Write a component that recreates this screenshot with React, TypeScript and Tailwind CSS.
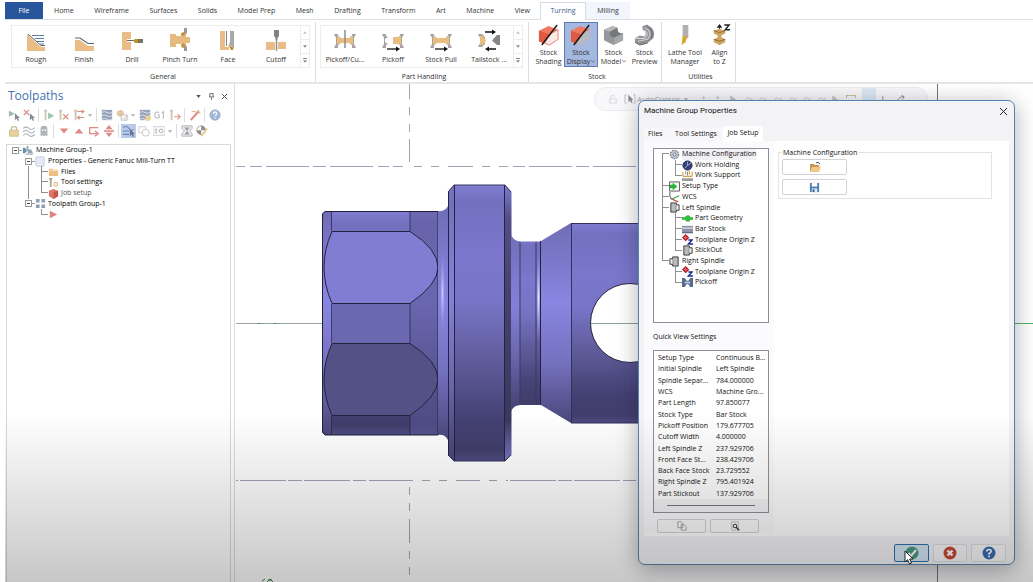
import React from "react";
import clsx from "clsx";

type IconProps = { className?: string };

/* ---------- ribbon data ---------- */

const tabs = [
  "Home",
  "Wireframe",
  "Surfaces",
  "Solids",
  "Model Prep",
  "Mesh",
  "Drafting",
  "Transform",
  "Art",
  "Machine",
  "View",
];

const generalItems = [
  {
    label: "Rough",
    icon: (
      <>
        <path d="M3 7L17 20H21V24H3Z" fill="#e9bd85" />
        <path d="M4 7L17 18.500H21" fill="none" stroke="#5b6572" strokeWidth="1" />
        <path d="M8 8.500H20M11 11.500H20M13 14.500H20M16 17H20" stroke="#5d7c9e" strokeWidth="1.100" />
      </>
    ),
  },
  {
    label: "Finish",
    icon: (
      <>
        <path d="M3 13H8L16 19H22V24H3Z" fill="#e9bd85" />
        <path d="M3 11H8L16 16.500H22" fill="none" stroke="#5b6572" strokeWidth="1.200" />
      </>
    ),
  },
  {
    label: "Drill",
    icon: (
      <>
        <path d="M2 5H11V12H7V15H11V23H2Z" fill="#e9bd85" />
        <path d="M7 13.500H14" stroke="#5b6572" />
        <path d="M13 13.500L15 12H19V16H15Z" fill="#bd9226" />
        <path d="M18 12H23V16H18Z" fill="#7a7466" />
      </>
    ),
  },
  {
    label: "Pinch Turn",
    icon: (
      <>
        <path d="M2 7H8V9H13V7H18V10H22V16H18V19H13V17H8V20H2Z" fill="#e6bb80" />
        <path d="M16 1H19V6L15 9L14 7L16 5ZM14 19L16 17L19 20V24H16V21Z" fill="#9a9a9d" />
        <path d="M13 6L17 5L16 9L13 8ZM13 18L16 16L17 20L14 21Z" fill="#c4922f" />
      </>
    ),
  },
  {
    label: "Face",
    icon: (
      <>
        <path d="M4 4H9V20H13V23H4Z" fill="#e9bd85" />
        <path d="M10.500 4V19" stroke="#7b838e" />
        <path d="M14 4H18V22L13 17L14 15Z" fill="#a9a9ac" />
        <path d="M12 17L17 21V23H15Z" fill="#c08b27" />
      </>
    ),
  },
  {
    label: "Cutoff",
    icon: (
      <>
        <path d="M2 15H11V23H2ZM14 15H22V22H14Z" fill="#e9bd85" />
        <path d="M10 3H15V9L13.500 11V13H11.500V11L10 9Z" fill="#818286" />
        <path d="M12.500 13V24" stroke="#8b8c8f" strokeWidth="1.400" />
      </>
    ),
  },
];

const chucks = (
  <path d="M1 7H5V9L7 10V17L5 18V21H1L3 17V11ZM23 7H19V9L17 10V17L19 18V21H23L21 17V11Z" fill="#a5a5a8" />
);

const handlingItems = [
  {
    label: "Pickoff/Cu...",
    icon: (
      <>
        {chucks}
        <path d="M4 9L8 11H16L20 9V18L16 16H8L4 18Z" fill="#e9bd80" />
        <path d="M12 3V21" stroke="#8b8c92" strokeWidth="1.500" />
      </>
    ),
  },
  {
    label: "Pickoff",
    icon: (
      <>
        {chucks}
        <path d="M12 10H17L20 9V18L17 17H12Z" fill="#e9bd80" />
        <path d="M7 10V17L4 15V12Z" fill="#fff" />
        <path d="M6 22H17" stroke="#111" strokeWidth="1.300" />
        <path d="M15 19.500L19 22L15 24.500Z" fill="#111" />
      </>
    ),
  },
  {
    label: "Stock Pull",
    icon: (
      <>
        {chucks}
        <path d="M4 9L8 11H16L20 9V18L16 16H8L4 18Z" fill="#e9bd80" />
        <path d="M6 22H17" stroke="#111" strokeWidth="1.300" />
        <path d="M15 19.500L19 22L15 24.500Z" fill="#111" />
      </>
    ),
  },
  {
    label: "Tailstock ...",
    icon: (
      <>
        <path d="M1 7H5L8 10V17L5 20H1L3 16V11Z" fill="#a5a5a8" />
        <path d="M3 9H6L9 13.500L6 18H3Z" fill="#e9bd80" />
        <path d="M23 8H20L15 13.500L20 18H23Z" fill="#85868a" />
        <path d="M8 5H16M11 22H19" stroke="#111" strokeWidth="1.300" />
        <path d="M15 2.500L19 5L15 7.500ZM12 19.500L8 22L12 24.500Z" fill="#111" />
      </>
    ),
  },
];

const slash = <path d="M4 22L20 1" stroke="#161616" strokeWidth="1.500" />;

const stockItems = [
  {
    label: ["Stock", "Shading"],
    icon: (
      <>
        <path d="M1 7L11 2L21 6V16L12 22L1 18Z" fill="#ef7960" />
        <path d="M12 11L21 6V16L12 22L7 20Z" fill="#fbe9e6" stroke="#e58a7a" />
        <path d="M1 7L12 11L8 17L5 20L1 18Z" fill="#de5a42" />
        {slash}
      </>
    ),
  },
  {
    label: ["Stock", "Display"],
    menu: true,
    active: true,
    icon: (
      <>
        <path d="M1 7L11 2L21 6L12 11V22L1 18Z" fill="#ef7960" />
        <path d="M1 7L12 11V15L5 20L1 18Z" fill="#de5a42" />
        <path d="M12 11L21 6V16L12 22L7 20Z" fill="#b6bac2" />
        {slash}
      </>
    ),
  },
  {
    label: ["Stock", "Model"],
    menu: true,
    icon: (
      <>
        <path d="M1 6L10 2L15 4L16 9L21 10V17L11 22L1 17Z" fill="#96979b" />
        <path d="M1 6L10 2L15 4L7 8Z" fill="#b9babe" />
        <path d="M7 8L15 4C15 8 16 10 21 10L12 14C8 14 7 12 7 8Z" fill="#77787c" />
        <path d="M12 14L21 10V17L11 22Z" fill="#a6a7ab" />
      </>
    ),
  },
  {
    label: ["Stock", "Preview"],
    icon: (
      <>
        <path d="M9 2L13 1C20 3 23 9 20 15L14 20L6 22L1 19V15L6 12L11 13C13 11 13 8 9 6Z" fill="#8f9094" />
        <path d="M9 6C15 8 15 12 11 15L1 15M11 4C18 7 18 12 14 16L4 18" fill="none" stroke="#cfd0d2" strokeWidth="1.200" />
        <path d="M13 1C18 4 20 9 18 15" fill="none" stroke="#67686b" />
        <path d="M1 19L6 22L14 20" fill="none" stroke="#67686b" />
      </>
    ),
  },
];

const utilityItems = [
  {
    label: ["Lathe Tool", "Manager"],
    icon: (
      <>
        <path d="M9 1H15V14L11 17L9 14Z" fill="#b0b1b5" />
        <path d="M9 13L14 12L12 19L8 22Z" fill="#d7a62e" />
      </>
    ),
  },
  {
    label: ["Align", "to Z"],
    icon: (
      <>
        <path d="M11 1V22" stroke="#444" strokeWidth="1.200" />
        <path d="M8 4L11 0L14 4Z" fill="#222" />
        <path d="M5 7L11 5L17 7V10L13 12V14L17 16V19L11 22L5 19V16L9 14V12L5 10Z" fill="#cda563" />
        <path d="M5 7L11 9L17 7M5 16L11 18L17 16" fill="none" stroke="#8f6c30" />
        <path d="M16 1H21L17 6H22" fill="none" stroke="#222" strokeWidth="1.500" />
      </>
    ),
  },
];

/* ---------- ribbon ---------- */

function MiniCaret({ className }: IconProps) {
  return (
    <svg viewBox="0 0 6 4" className={clsx("w-[4px] h-[3px]", className)} aria-hidden>
      <path d="M0 0H6L3 4Z" fill="currentColor" />
    </svg>
  );
}

function Gallery({ items }: { items: { label: string; icon: React.ReactNode }[] }) {
  return (
    <div className="flex border border-[#ececee] h-[43px]">
      {items.map((it) => (
        <button key={it.label} type="button" className="w-[48px] flex flex-col items-center pt-px">
          <svg viewBox="0 0 24 26" className="w-[24px] h-[26px] mb-[2px]" aria-hidden>
            {it.icon}
          </svg>
          <span className="whitespace-nowrap leading-[9px]">{it.label}</span>
        </button>
      ))}
      <div className="w-[9px] flex flex-col border-l border-[#ececee] text-[#888]">
        <button type="button" aria-label="Scroll up" className="flex-1 flex items-center justify-center border-b border-[#ececee] text-[#c4c4c4]">
          <MiniCaret className="rotate-180" />
        </button>
        <button type="button" aria-label="Scroll down" className="flex-1 flex items-center justify-center border-b border-[#ececee]">
          <MiniCaret />
        </button>
        <button type="button" aria-label="More" className="flex-1 flex flex-col items-center justify-center gap-px">
          <span className="w-[4px] h-px bg-[#888]" />
          <MiniCaret />
        </button>
      </div>
    </div>
  );
}

type BigItem = { label: string[]; icon: React.ReactNode; menu?: boolean; active?: boolean };

function BigButton({ item }: { item: BigItem }) {
  return (
    <button
      type="button"
      className={clsx(
        "h-[45px] flex flex-col items-center border pt-px whitespace-nowrap",
        item.active ? "bg-[#a5b8e0] border-[#5c7cb8] min-w-[34px]" : "border-transparent min-w-[31px] px-px"
      )}
    >
      <svg viewBox="0 0 23 23" className="w-[22px] h-[22px] mb-[2px]" aria-hidden>
        {item.icon}
      </svg>
      <span className="leading-[9px]">{item.label[0]}</span>
      <span className="leading-[9px] flex items-center gap-px">
        {item.label[1]}
        {item.menu && (
          <svg viewBox="0 0 6 4" className="w-[4px] h-[3px]" aria-hidden>
            <path d="M0 0L3 3L6 0" fill="none" stroke="#555" />
          </svg>
        )}
      </span>
    </button>
  );
}

function Group({ title, className, children }: { title: string; className?: string; children: React.ReactNode }) {
  return (
    <section className={clsx("flex flex-col justify-between border-r border-[#dcdcde]", className)}>
      <div className="flex">{children}</div>
      <h2 className="text-center leading-[10px]">{title}</h2>
    </section>
  );
}

function Ribbon() {
  return (
    <header className="pl-[5px] pt-[2px] font-['Open_Sans',sans-serif] text-[7px] text-[#333]">
      <nav className="flex h-[18px] border-b border-[#dfe0e4]">
        <button type="button" className="w-[38px] h-[17px] pt-px bg-[#28559b] text-white">
          File
        </button>
        <div className="w-[497px] flex justify-between pl-px">
          {tabs.map((t) => (
            <button key={t} type="button" className="px-[10px] pt-px">
              {t}
            </button>
          ))}
        </div>
        <button type="button" className="w-[46px] h-[18px] bg-white border border-b-0 border-[#d5dbe6] text-[#3f5f8f]">
          Turning
        </button>
        <button type="button" className="w-[44px] pt-px bg-[#f2f6fc]">
          Milling
        </button>
      </nav>
      <div className="flex h-[62px] pt-[2px]">
        <Group title="General" className="w-[311px] pt-[3px] pl-[6px]">
          <Gallery items={generalItems} />
        </Group>
        <Group title="Part Handling" className="w-[213px] pt-[3px] pl-[4px]">
          <Gallery items={handlingItems} />
        </Group>
        <Group title="Stock" className="w-[133px] pl-[4px]">
          {stockItems.map((it) => (
            <BigButton key={it.label.join(" ")} item={it} />
          ))}
        </Group>
        <Group title="Utilities" className="w-[74px] pl-[4px]">
          {utilityItems.map((it) => (
            <BigButton key={it.label.join(" ")} item={it} />
          ))}
        </Group>
      </div>
      <div className="h-[2px] bg-[#e6e6e8]" />
    </header>
  );
}

/* ---------- toolpaths panel ---------- */

function ToolIcon({ label, selected, children }: { label: string; selected?: boolean; children: React.ReactNode }) {
  return (
    <button
      type="button"
      aria-label={label}
      className={clsx("w-[15px] h-[14px] flex items-center justify-center", selected && "bg-[#b9c9ea]")}
    >
      <svg viewBox="0 0 14 14" className="w-[12px] h-[12px] opacity-60" aria-hidden>
        {children}
      </svg>
    </button>
  );
}

function ToolSep() {
  return <span className="w-[5px] h-[14px] flex justify-center"><span className="w-px bg-[#dedee0]" /></span>;
}

function ToolCaret() {
  return <span className="w-[8px] flex items-center justify-center text-[#aaa]"><MiniCaret /></span>;
}

const pointer = <path d="M8 5V13L10 11L11.500 14L13 13L11.500 10.500H14Z" fill="#333c4c" />;
const toolbit = <path d="M1 1H5L4 5V13H2V5Z" fill="#a9a27c" />;
const cross = <path d="M6 6L12 12M12 6L6 12" stroke="#c2463c" strokeWidth="1.500" />;
const waveBlock = (
  <>
    <rect x="1" y="1" width="12" height="12" fill="#4f658c" />
    <path d="M1 4Q4 2 7 4T13 4M1 8Q4 6 7 8T13 8M1 12Q4 10 7 12T13 12" fill="none" stroke="#fff" strokeWidth="0.800" />
  </>
);

function PanelToolbar() {
  return (
    <div className="pl-px flex flex-col gap-[2px]">
      <div className="flex">
        <ToolIcon label="Select all">
          <path d="M1 2L8 5.500L1 9Z" fill="#58906f" />
          {pointer}
        </ToolIcon>
        <ToolIcon label="Unselect all">
          <path d="M1 1L7 7M7 1L1 7" stroke="#c2463c" strokeWidth="1.500" />
          {pointer}
        </ToolIcon>
        <ToolSep />
        <ToolIcon label="Regenerate selected">
          {toolbit}
          <path d="M6 4L13 8L6 12Z" fill="#58a078" />
        </ToolIcon>
        <ToolIcon label="Regenerate dirty">
          {toolbit}
          {cross}
        </ToolIcon>
        <ToolIcon label="Transform toolpaths">
          {toolbit}
          <path d="M5 3H13M10 1L13 3L10 5M13 10H5M8 8L5 10L8 12" fill="none" stroke="#c2463c" strokeWidth="1.200" />
        </ToolIcon>
        <ToolCaret />
        <ToolSep />
        <ToolIcon label="Backplot">{waveBlock}</ToolIcon>
        <ToolIcon label="Verify">
          <path d="M1 3L6 1L9 3V8L4 9L1 7Z" fill="#d8a25d" />
          <path d="M6 7H13V13H6Z" fill="#fff" stroke="#7b879c" />
          <path d="M8 10L10 12L13 7" fill="none" stroke="#d08a3c" />
        </ToolIcon>
        <ToolCaret />
        <ToolIcon label="Simulate">
          {waveBlock}
          <circle cx="10.500" cy="10.500" r="3.300" fill="#dfb450" />
        </ToolIcon>
        <ToolIcon label="Post">
          <path d="M6 4Q1 2 1 7T6 10V7H4M9 5L11 3V11" fill="none" stroke="#8a8f99" strokeWidth="1.300" />
        </ToolIcon>
        <ToolIcon label="High feed">
          {toolbit}
          <path d="M6 9H13M10 6L13 9L10 12" fill="none" stroke="#c2463c" strokeWidth="1.200" />
        </ToolIcon>
        <ToolSep />
        <ToolIcon label="Tool wand">
          <path d="M2 13L11 3" stroke="#c2463c" strokeWidth="2.500" />
          <path d="M3 3H8M10 1L13 5" stroke="#cf8a3a" strokeWidth="1.500" />
        </ToolIcon>
        <ToolSep />
        <ToolIcon label="Help">
          <circle cx="7" cy="7" r="6" fill="#5b8ac6" stroke="#6c7788" />
          <path d="M5 5.500Q5 3.500 7 3.500T9 5.500Q9 6.500 7 8M7 9.500V11" fill="none" stroke="#fff" strokeWidth="1.500" />
        </ToolIcon>
      </div>
      <div className="flex">
        <ToolIcon label="Lock">
          <path d="M4 6V4Q4 2 7 2T10 4V6" fill="none" stroke="#a08a4a" strokeWidth="1.500" />
          <rect x="2" y="6" width="10" height="7" fill="#dcb65a" stroke="#ab8b3b" />
        </ToolIcon>
        <ToolIcon label="Toggle display">
          <path d="M0 4Q4 1 7 4T14 3M0 8Q4 5 7 8T14 7M0 12Q4 9 7 12T14 11" fill="none" stroke="#6d7f96" strokeWidth="1.200" />
        </ToolIcon>
        <ToolIcon label="Ghost">
          <path d="M3 13V5Q3 1 7 1T11 5V13L9 12L7 13L5 12Z" fill="#7c7f85" />
          <path d="M5 5H6.500V7H5ZM8 5H9.500V7H8Z" fill="#fff" />
        </ToolIcon>
        <ToolSep />
        <ToolIcon label="Move down"><path d="M2 4H12L7 10Z" fill="#cc3a35" /></ToolIcon>
        <ToolIcon label="Move up"><path d="M2 10H12L7 4Z" fill="#cc3a35" /></ToolIcon>
        <ToolIcon label="Position insert">
          <path d="M12 3H2V10H10M8 7L12 10L8 13" fill="none" stroke="#cc3a35" strokeWidth="1.500" />
        </ToolIcon>
        <ToolIcon label="Scroll insert">
          <path d="M3 5L7 0L11 5ZM3 9L7 14L11 9ZM1 6H13V8H1Z" fill="#cc3a35" />
        </ToolIcon>
        <ToolSep />
        <ToolIcon label="Only display selected" selected>
          <path d="M0 3Q4 0 7 4T12 5M0 7H7M0 11H7" fill="none" stroke="#3c5a94" strokeWidth="1.300" />
          {pointer}
        </ToolIcon>
        <ToolIcon label="Display geometry">
          <path d="M1 2H9V9H1Z" fill="none" stroke="#a5a0b5" />
          <circle cx="9" cy="9" r="4" fill="#fff" stroke="#b08d94" />
        </ToolIcon>
        <ToolIcon label="Advanced display">
          <path d="M0 2H14V12H0Z" fill="none" stroke="#a9a9b0" />
          <path d="M2 5H5M2 7H5M2 9H5" stroke="#667" />
          <circle cx="9.500" cy="7" r="2.200" fill="none" stroke="#667" />
        </ToolIcon>
        <ToolCaret />
        <ToolSep />
        <ToolIcon label="Cycle time">
          <path d="M1 1H13V4L10 7L13 10V13H1V10L4 7L1 4Z" fill="#d9dade" stroke="#777b84" />
          <path d="M4 3H10L7 7L10 11H4L7 7Z" fill="#555b66" />
        </ToolIcon>
        <ToolIcon label="Options">
          <circle cx="6" cy="6" r="5" fill="#fff" stroke="#555" />
          <path d="M6 1A5 5 0 0 1 11 6H6ZM6 11A5 5 0 0 1 1 6H6Z" fill="#444" />
          <path d="M6 13L13 4" stroke="#d9a73c" strokeWidth="2" />
        </ToolIcon>
      </div>
    </div>
  );
}

type GuideKind = "first" | "tee" | "end" | "line" | "blank";

/* One cell of connector lines in a tree row */
function Guide({ kind, wide }: { kind: GuideKind; wide?: boolean }) {
  const up = kind === "tee" || kind === "end" || kind === "line";
  const down = kind === "first" || kind === "tee" || kind === "line";
  const across = kind === "first" || kind === "tee" || kind === "end";
  return (
    <span className={clsx("self-stretch flex flex-col shrink-0", wide ? "w-[13px]" : "w-[7px]")}>
      <span className={clsx("h-1/2 border-[#909090]", up && "border-l", across && "border-b")} />
      <span className={clsx("h-1/2 border-[#909090]", down && "border-l")} />
    </span>
  );
}

function Expander({ open }: { open?: boolean }) {
  return (
    <>
      <button type="button" aria-label={open ? "Collapse" : "Expand"} className="w-[7px] h-[7px] border border-[#999] bg-white flex items-center justify-center shrink-0">
        <span className="w-[3px] h-px bg-[#444]" />
      </button>
      <span className="w-[3px] h-px bg-[#999] shrink-0" />
    </>
  );
}

function TreeIcon({ children }: { children: React.ReactNode }) {
  return (
    <svg viewBox="0 0 12 12" className="w-[11px] h-[11px] shrink-0 mr-[2px]" aria-hidden>
      {children}
    </svg>
  );
}

function OperationTree() {
  return (
    <ul className="grid auto-rows-fr h-[75px] pl-[5px] text-[7px] text-black whitespace-nowrap">
      <li className="flex items-center">
        <Expander open />
        <TreeIcon>
          <path d="M1 3H3L5 5V7L3 9H1Z" fill="#5d93ad" />
          <path d="M5 1H7V5H10L12 9H6V6H5Z" fill="#98a5b5" />
          <path d="M4 10H12" stroke="#8f97a2" />
        </TreeIcon>
        <span className="pl-px">Machine Group-1</span>
      </li>
      <li className="flex items-center pl-[13px]">
        <Expander open />
        <TreeIcon>
          <rect x="1" y="1" width="9" height="10" rx="1" fill="#e7eaf6" stroke="#c3cae2" />
        </TreeIcon>
        Properties - Generic Fanuc Mill-Turn TT
      </li>
      <li className="flex items-center pl-[16px]">
        <Guide kind="line" wide />
        <Guide kind="tee" />
        <TreeIcon>
          <path d="M1 3H5L6 4H11V11H1Z" fill="#efbf82" />
          <path d="M1 5H11" stroke="#f8deb8" />
        </TreeIcon>
        Files
      </li>
      <li className="flex items-center pl-[16px]">
        <Guide kind="line" wide />
        <Guide kind="tee" />
        <TreeIcon>
          <path d="M1 1H5L4 4V11H2V4Z" fill="#b0a890" />
          <circle cx="8.500" cy="8" r="2" fill="none" stroke="#d8b878" strokeWidth="1.300" />
        </TreeIcon>
        Tool settings
      </li>
      <li className="flex items-center pl-[16px] text-[#555]">
        <Guide kind="line" wide />
        <Guide kind="end" />
        <TreeIcon>
          <path d="M1 3L6 1L11 3V9L6 12L1 9Z" fill="#dc7468" />
          <path d="M6 5L11 3V9L6 12Z" fill="#c4564c" />
        </TreeIcon>
        Job setup
      </li>
      <li className="flex items-center pl-[13px]">
        <Expander open />
        <TreeIcon>
          <path d="M1 1H5V5H1ZM7 1H11V5H7ZM1 7H5V11H1ZM7 7H11V11H7Z" fill="#8ca0b5" />
        </TreeIcon>
        Toolpath Group-1
      </li>
      <li className="flex items-center pl-[16px]">
        <Guide kind="blank" wide />
        <Guide kind="end" />
        <TreeIcon>
          <path d="M2 2L10 6L2 10Z" fill="#e5817b" />
        </TreeIcon>
      </li>
    </ul>
  );
}

function ToolpathsPanel() {
  return (
    <aside className="w-[226px] shrink-0 flex flex-col font-['Open_Sans',sans-serif]">
      <div className="flex items-center h-[24px] pl-[3px] pr-[4px]">
        <h2 className="flex-1 text-[12px] leading-[24px] text-[#3e72b0]">Toolpaths</h2>
        <div className="flex items-center gap-[8px] text-[#555]">
          <MiniCaret className="w-[5px] h-[3px]" />
          <svg viewBox="0 0 6 8" className="w-[5px] h-[7px]" aria-hidden>
            <path d="M1 0.500H5V4.500M1 0.500V4.500M0 4.500H6M3 5V8" fill="none" stroke="currentColor" />
          </svg>
          <svg viewBox="0 0 6 6" className="w-[5px] h-[5px]" aria-hidden>
            <path d="M0 0L6 6M6 0L0 6" stroke="currentColor" strokeWidth="1.200" />
          </svg>
        </div>
      </div>
      <PanelToolbar />
      <div className="flex-1 mt-[6px] ml-px border border-b-0 border-[#dadadc]">
        <OperationTree />
      </div>
    </aside>
  );
}

/* ---------- graphics view ---------- */

function PartView() {
  return (
    <svg viewBox="235 84 798 498" preserveAspectRatio="xMinYMin slice" className="w-full h-full" role="img" aria-label="Turned part">
      <defs>
        <linearGradient id="turned" x1="0" y1="0" x2="0" y2="1">
          <stop offset="0" stopColor="#817ed2" />
          <stop offset="0.060" stopColor="#7370bf" />
          <stop offset="0.250" stopColor="#7a77cc" />
          <stop offset="0.420" stopColor="#7875c8" />
          <stop offset="0.620" stopColor="#615e9e" />
          <stop offset="0.850" stopColor="#444174" />
          <stop offset="0.960" stopColor="#413e6b" />
          <stop offset="1" stopColor="#4f4c83" />
        </linearGradient>
        <linearGradient id="chamfer" x1="0" y1="0" x2="0" y2="1">
          <stop offset="0" stopColor="#6f6cb6" />
          <stop offset="0.400" stopColor="#8986e2" />
          <stop offset="0.700" stopColor="#7471bf" />
          <stop offset="1" stopColor="#4a477a" />
        </linearGradient>
        <linearGradient id="dark" x1="0" y1="0" x2="0" y2="1">
          <stop offset="0" stopColor="#7f7cd0" />
          <stop offset="0.120" stopColor="#514e86" />
          <stop offset="0.400" stopColor="#45426f" />
          <stop offset="0.850" stopColor="#3a375f" />
          <stop offset="1" stopColor="#7a77c8" />
        </linearGradient>
        <radialGradient id="glint">
          <stop offset="0" stopColor="#eeeeff" />
          <stop offset="1" stopColor="#a09dee" stopOpacity="0" />
        </radialGradient>
      </defs>

      {/* stock boundary */}
      <g stroke="#a0a3b3" fill="none">
        <path d="M236 166.500H640" strokeDasharray="9 5 12 4 43 4 13 4 43 5 11 4 10 11 8 9 8 9 25 9 8 9" />
        <path d="M236 480.500H640" strokeDasharray="2 2 46 2 14 2 46 3 13 3 44 9 8 9 8 9 24 9 8 9" />
        <path d="M409.500 84V162" strokeDasharray="15 8 8 9 8 7 24 20" />
        <path d="M409.500 487V575" strokeDasharray="8 8 8 8 24 8 8 8" />
        <path d="M937.500 84V582" stroke="#77777c" />
      </g>
      <path d="M236 323.500H1033" stroke="#9aa89e" />
      <path d="M1014 323.500H1033" stroke="#4fb062" />
      <path d="M258 323.500H260M274 323.500H276" stroke="#3d8a4c" />

      {/* hex head */}
      <path d="M325 211H438V435H325L322 432V214Z" fill="url(#turned)" />
      <path d="M325 211H332V435H325L322 432V214Z" fill="url(#chamfer)" />
      <path d="M410 211H438V435H410Z" fill="#5d5a9b" opacity="0.550" />
      <path d="M332 304H410V343H332Z" fill="#6b68b2" />
      <g stroke="#23213d" strokeWidth="1">
        <path d="M332 231.500H410Q438 249 438 267.500Q438 284 410 303.500H332Q316 267 332 231.500Z" fill="#807dd2" />
        <path d="M332 343.500H410Q438 361 438 379.500Q438 396 410 415.500H332Q316 379 332 343.500Z" fill="#535185" />
        <path d="M325 211.500H438V435H325L322.500 432V214Z" fill="none" />
        <path d="M331.500 212V231M331.500 304V343M331.500 416V435M410 212V231M410 304V343M410 416V435" fill="none" opacity="0.700" />
      </g>

      {/* groove between head and flange */}
      <path d="M438 211Q445 212 448 206V440Q445 434 438 435Z" fill="url(#chamfer)" />
      <ellipse cx="442.500" cy="292" rx="2.500" ry="42" fill="url(#glint)" opacity="0.700" />

      {/* flange */}
      <path d="M454 185H505L511 192V455L505 461H454L448 455V192Z" fill="url(#turned)" />
      <path d="M448 192L454 185V461L448 455Z" fill="url(#chamfer)" opacity="0.700" />
      <path d="M504.500 185L511.500 192V455L504.500 461Z" fill="url(#dark)" />
      <path d="M448.500 192V455M454.500 185V461M504.500 185V461" stroke="#24223f" />
      <path d="M448 192L454 185H505L511 192M448 455L454 461H505L511 455" fill="none" stroke="#36345f" />

      {/* neck */}
      <path d="M511 235Q514 241 520 241.500H541V405H520Q514 405 511 411Z" fill="url(#turned)" />
      <path d="M511 235Q514 241 520 241.500V405Q514 405 511 411Z" fill="url(#chamfer)" opacity="0.600" />
      <path d="M520 242V405M536 242V405" stroke="#3a3766" />

      {/* cone and body */}
      <path d="M541 241L571 223V423L541 405Z" fill="url(#chamfer)" />
      <ellipse cx="538.500" cy="298" rx="2.500" ry="45" fill="url(#glint)" />
      <path d="M540.500 241V405" stroke="#24223f" />
      <path d="M571 223H660V423H571Z" fill="url(#turned)" />
      <path d="M571.500 223V423M571 223.500H660M571 423H660" stroke="#33315a" />
      <circle cx="630" cy="323" r="39.500" fill="#fff" stroke="#24223f" />
      <path d="M591 323.500H660" stroke="#8d9f92" />

      {/* gnomon tip */}
      <path d="M262 581L265 579M267 582L270 579L273 582M268 580H272" stroke="#3b7a45" fill="none" />
    </svg>
  );
}

function SelectionBar() {
  return (
    <div className="absolute left-[359px] top-[3px] w-[334px] h-[24px] flex items-center pl-[14px] rounded-full border border-[#ececee] bg-[#f8f7f9] font-['Open_Sans',sans-serif] text-[8px] text-[#a5a5aa]">
      <svg viewBox="0 0 10 12" className="w-[8px] h-[10px]" aria-hidden>
        <path d="M2 6V3Q5 0 7 3M1 6H9V11H1Z" fill="none" stroke="#d9d9dc" strokeWidth="1.300" />
      </svg>
      <svg viewBox="0 0 14 12" className="w-[12px] h-[10px] ml-[7px]" aria-hidden>
        <path d="M3 1H1V11H3M11 1H13V11H11" fill="none" stroke="#b5b5b9" />
        <path d="M5 1V10L7 8L9 11L10 10L9 7H11Z" fill="#8c8c90" />
      </svg>
      <span className="ml-px">AutoCursor</span>
      <MiniCaret className="ml-[4px]" />
      <div className="flex-1 flex items-center justify-between pl-[12px] pr-[22px] text-[#c4c4c9]">
        {Array.from({ length: 10 }).map((_, i) => (
          <svg key={i} viewBox="0 0 10 10" className="w-[9px] h-[9px]" aria-hidden>
            <path
              d={i < 2 ? "M2 3H6M4 1V5" : i === 2 || i === 9 ? "M2 1V8L4 6L6 9L7 8L6 6H8Z" : "M1 8Q3 1 6 4T9 3"}
              fill={i === 2 || i === 9 ? "currentColor" : "none"}
              stroke="currentColor"
            />
          </svg>
        ))}
        <span className="w-[10px] h-[8px] border border-dashed border-[#c9b98e]" />
        <span className="w-[14px] h-[22px] bg-[#dce8f5]" />
        <svg viewBox="0 0 10 10" className="w-[9px] h-[9px]" aria-hidden>
          <path d="M2 1V8L5 6L8 8" fill="none" stroke="#888" />
        </svg>
        <svg viewBox="0 0 10 10" className="w-[9px] h-[9px]" aria-hidden>
          <path d="M1 8Q3 1 9 2M6 0L9 2L7 5" fill="none" stroke="#888" />
        </svg>
      </div>
    </div>
  );
}

/* ---------- machine group dialog ---------- */

const gear = (
  <>
    <circle cx="6" cy="6" r="4.500" fill="#c3cad3" stroke="#7e8996" strokeDasharray="2 1" strokeWidth="1.500" />
    <circle cx="6" cy="6" r="1.600" fill="#fff" stroke="#5b6572" />
  </>
);
const originZ = (
  <>
    <path d="M4 0L8 4L4 8L0 4Z" fill="#b3161f" />
    <path d="M4 2V6M2 4H6" stroke="#e78" />
    <path d="M7 6.500H11L7 11H12" fill="none" stroke="#1b2c8e" strokeWidth="1.600" />
  </>
);
const spindle = (
  <>
    <path d="M2 1H8V11H2Z" fill="#b9bbbf" stroke="#333" />
    <path d="M8 3H11V9H8" fill="#eee" stroke="#333" />
  </>
);

const setupTree: { label: string; guides: GuideKind[]; icon: React.ReactNode }[] = [
  { label: "Machine Configuration", guides: ["first"], icon: gear },
  {
    label: "Work Holding",
    guides: ["line", "tee"],
    icon: (
      <>
        <circle cx="6" cy="6" r="5" fill="#34437e" stroke="#20294d" />
        <path d="M6 6L10 3M6 6L3 9M6 6V2" stroke="#a7b4dd" />
      </>
    ),
  },
  {
    label: "Work Support",
    guides: ["line", "end"],
    icon: (
      <>
        <path d="M1 2V7M11 2V7M4 1V5M8 1V5M1 7H11" stroke="#d2a44e" strokeWidth="1.300" />
        <path d="M0 9H12V12H0Z" fill="#9b9b98" />
        <path d="M6 2V6" stroke="#5c82b0" />
      </>
    ),
  },
  {
    label: "Setup Type",
    guides: ["tee"],
    icon: (
      <>
        <path d="M0.500 1H11.500V11H0.500Z" fill="#f2f7f2" stroke="#555" />
        <path d="M1 4H4V2L9 6L4 10V8H1Z" fill="#26b336" />
      </>
    ),
  },
  {
    label: "WCS",
    guides: ["tee"],
    icon: (
      <>
        <path d="M1 0V5L3 8" fill="none" stroke="#445" />
        <path d="M2 7L10 11" stroke="#c0392b" strokeWidth="1.300" />
        <path d="M3 8L11 4" stroke="#3ea552" strokeWidth="1.300" />
      </>
    ),
  },
  { label: "Left Spindle", guides: ["tee"], icon: spindle },
  {
    label: "Part Geometry",
    guides: ["line", "tee"],
    icon: <path d="M0 5H3L5 3H8L9 5H12V7H9L8 9H5L3 7H0Z" fill="#2fc23e" stroke="#1f8a2b" strokeWidth="0.500" />,
  },
  {
    label: "Bar Stock",
    guides: ["line", "tee"],
    icon: (
      <>
        <path d="M0 2H12V10H0Z" fill="#8e93a8" />
        <path d="M0 4.500H12" stroke="#d5d8e4" strokeWidth="1.500" />
        <path d="M0 9.500H12" stroke="#555b73" />
      </>
    ),
  },
  { label: "Toolplane Origin Z", guides: ["line", "tee"], icon: originZ },
  { label: "StickOut", guides: ["line", "end"], icon: spindle },
  { label: "Right Spindle", guides: ["end"], icon: <g transform="matrix(-1 0 0 1 12 0)">{spindle}</g> },
  { label: "Toolplane Origin Z", guides: ["blank", "tee"], icon: originZ },
  {
    label: "Pickoff",
    guides: ["blank", "end"],
    icon: (
      <>
        <path d="M0 1H3L5 4H7L9 1H12V11H9L7 8H5L3 11H0Z" fill="#54698c" />
        <path d="M3 5H9V7H3Z" fill="#b9cbe4" />
      </>
    ),
  },
];

const quickSettings = [
  ["Setup Type", "Continuous B..."],
  ["Initial Spindle", "Left Spindle"],
  ["Spindle Separ...", "784.000000"],
  ["WCS", "Machine Gro..."],
  ["Part Length", "97.850077"],
  ["Stock Type", "Bar Stock"],
  ["Pickoff Position", "179.677705"],
  ["Cutoff Width", "4.000000"],
  ["Left Spindle Z", "237.929706"],
  ["Front Face St...", "238.429706"],
  ["Back Face Stock", "23.729552"],
  ["Right Spindle Z", "795.401924"],
  ["Part Stickout", "137.929706"],
];

function DialogButton({ label, className, children }: { label: string; className?: string; children: React.ReactNode }) {
  return (
    <button
      type="button"
      aria-label={label}
      className={clsx("flex items-center justify-center rounded-[2px] border", className)}
    >
      {children}
    </button>
  );
}

function MachineGroupDialog() {
  return (
    <div
      role="dialog"
      aria-label="Machine Group Properties"
      className="absolute right-[18px] top-[16px] w-[377px] flex flex-col rounded-[7px] border border-[#5583ad] bg-[#f3f2f5] shadow-[0_4px_22px_rgba(20,20,40,0.35)] px-[5px] font-['Open_Sans',sans-serif] text-[7px] text-[#111]"
    >
      <div className="flex items-center justify-between h-[20px] pr-px">
        <h2 className="font-[Roboto,sans-serif] text-[8px]">Machine Group Properties</h2>
        <button type="button" aria-label="Close" className="w-[9px] h-[9px]">
          <svg viewBox="0 0 9 9" className="w-[9px] h-[9px]" aria-hidden>
            <path d="M1 1L8 8M8 1L1 8" stroke="#222" />
          </svg>
        </button>
      </div>
      <div className="flex items-end h-[20px]">
        <button type="button" className="w-[25px] h-[13px] bg-[#f7f6f9] text-left pl-[4px]">
          Files
        </button>
        <button type="button" className="w-[54px] h-[13px] bg-[#f7f6f9] whitespace-nowrap">
          Tool Settings
        </button>
        <button type="button" className="w-[40px] h-[15px] bg-white whitespace-nowrap">
          Job Setup
        </button>
      </div>
      <div className="flex bg-white pb-[3px]">
        <div className="w-[130px] pl-[9px] pr-[5px] pt-[7px] bg-[#fbfafd]">
          <ul className="grid auto-rows-fr h-[175px] border border-[#8f9095] bg-white pb-[34px] pl-[8px] whitespace-nowrap">
            {setupTree.map((row, i) => (
              <li key={i} className="flex items-center">
                {row.guides.map((g, j) => (
                  <Guide key={j} kind={g} wide={j < row.guides.length - 1} />
                ))}
                <TreeIcon>{row.icon}</TreeIcon>
                <span className={clsx(i === 0 && "bg-[#f1f0f3]")}>{row.label}</span>
              </li>
            ))}
          </ul>
          <h3 className="leading-[27px]">Quick View Settings</h3>
          <div className="h-[163px] border border-[#8f9095] bg-white pt-px">
            <table className="h-[147px] w-full table-fixed text-left leading-[9px] whitespace-nowrap">
              <tbody>
                {quickSettings.map(([name, value]) => (
                  <tr key={name}>
                    <td className="w-[62px] p-0 pl-[4px]">{name}</td>
                    <td className="p-0">{value}</td>
                  </tr>
                ))}
              </tbody>
            </table>
            <div className="h-[13px] flex items-center justify-center bg-[#f5f4f7]">
              <span className="w-[88px] h-px bg-[#777]" />
            </div>
          </div>
          <div className="flex gap-[4px] pt-[6px] pl-[4px]">
            <DialogButton label="Copy settings" className="w-[49px] h-[14px] border-[#d2d2d6] bg-[#fbfbfc]">
              <svg viewBox="0 0 12 12" className="w-[10px] h-[10px]" aria-hidden>
                <path d="M1 1H5L7 3V8H1ZM5 4H8L11 7V11H5Z" fill="#fff" stroke="#999" />
              </svg>
            </DialogButton>
            <DialogButton label="View settings" className="w-[49px] h-[14px] border-[#d2d2d6] bg-[#fbfbfc]">
              <svg viewBox="0 0 12 12" className="w-[10px] h-[10px]" aria-hidden>
                <path d="M2 1H10V11H2Z" fill="#fff" stroke="#bbb" />
                <circle cx="6" cy="6" r="2.200" fill="none" stroke="#333" strokeWidth="1.200" />
                <path d="M7.500 7.500L11 11" stroke="#333" strokeWidth="1.600" />
              </svg>
            </DialogButton>
          </div>
        </div>
        <div className="flex-1 pl-[4px] pr-[17px] pt-[7px]">
          <fieldset className="border border-[#e3e3e6] h-[51px] pt-[2px] pl-[3px] flex flex-col gap-[4px] min-w-0">
            <legend className="leading-[9px] px-px">Machine Configuration</legend>
            <DialogButton label="Open configuration" className="w-[65px] h-[16px] border-[#d2d2d6] bg-white">
              <svg viewBox="0 0 12 12" className="w-[12px] h-[12px]" aria-hidden>
                <path d="M1 3H5L6 4H10V11H1Z" fill="#c99a55" />
                <path d="M3 6H12L10 11H1Z" fill="#f0c98a" />
                <path d="M7 2Q9 0 11 3" fill="none" stroke="#49505c" />
              </svg>
            </DialogButton>
            <DialogButton label="Save configuration" className="w-[65px] h-[16px] border-[#d2d2d6] bg-white">
              <svg viewBox="0 0 12 12" className="w-[11px] h-[11px]" aria-hidden>
                <path d="M1 1H11V11H1Z" fill="#4a7db8" />
                <path d="M3 1H9V5H3Z" fill="#fff" />
                <path d="M3 7H9V11H3Z" fill="#dfe7f1" />
                <path d="M4 8H6V11H4Z" fill="#3a5f8f" />
              </svg>
            </DialogButton>
          </fieldset>
        </div>
      </div>
      <div className="flex justify-end gap-[4px] pt-[8px] pb-[2px] pr-[3px]">
        <DialogButton label="OK" className="w-[35px] h-[18px] border-[#2f72ad] bg-[#d5e6f7]">
          <svg viewBox="0 0 14 14" className="w-[14px] h-[14px]" aria-hidden>
            <circle cx="7" cy="7" r="6.500" fill="#4b9a80" />
            <path d="M3.500 7L6 10L11 4" fill="none" stroke="#fff" strokeWidth="2" />
          </svg>
        </DialogButton>
        <DialogButton label="Cancel" className="w-[34px] h-[18px] border-[#dedee1] bg-[#f8f8fa]">
          <svg viewBox="0 0 14 14" className="w-[14px] h-[14px]" aria-hidden>
            <circle cx="7" cy="7" r="6.500" fill="#c64a35" />
            <path d="M4.500 4.500L9.500 9.500M9.500 4.500L4.500 9.500" stroke="#fff" strokeWidth="2.400" />
          </svg>
        </DialogButton>
        <DialogButton label="Help" className="w-[35px] h-[18px] border-[#dedee1] bg-[#f8f8fa]">
          <svg viewBox="0 0 14 14" className="w-[14px] h-[14px]" aria-hidden>
            <circle cx="7" cy="7" r="6.500" fill="#3a6cb0" />
            <path d="M4.800 5.500Q4.800 3.500 7 3.500T9.200 5.300Q9.200 6.500 7 7.500V8.500M7 9.500V11.300" fill="none" stroke="#fff" strokeWidth="1.700" />
          </svg>
        </DialogButton>
      </div>
      <svg viewBox="0 0 10 15" className="absolute right-[100px] -bottom-px w-[10px] h-[15px] z-30" aria-hidden>
        <path d="M1 1V12L3.500 9.700L5.500 14L7.500 13L5.600 9H9Z" fill="#fff" stroke="#222" />
      </svg>
    </div>
  );
}

export default function App() {
  return (
    <div className="relative min-h-screen flex flex-col overflow-hidden bg-white">
      <Ribbon />
      <main className="flex-1 flex pl-[5px]">
        <ToolpathsPanel />
        <div className="w-[4px] shrink-0 border-r border-[#dcdcdf]" />
        <div className="relative flex-1 min-w-0">
          <PartView />
          <SelectionBar />
          <MachineGroupDialog />
        </div>
      </main>
      {/* shade over the lower part of the window */}
      <div className="pointer-events-none absolute left-[5px] right-0 bottom-0 h-[29%] bg-linear-to-b from-black/0 to-black/22" />
    </div>
  );
}
